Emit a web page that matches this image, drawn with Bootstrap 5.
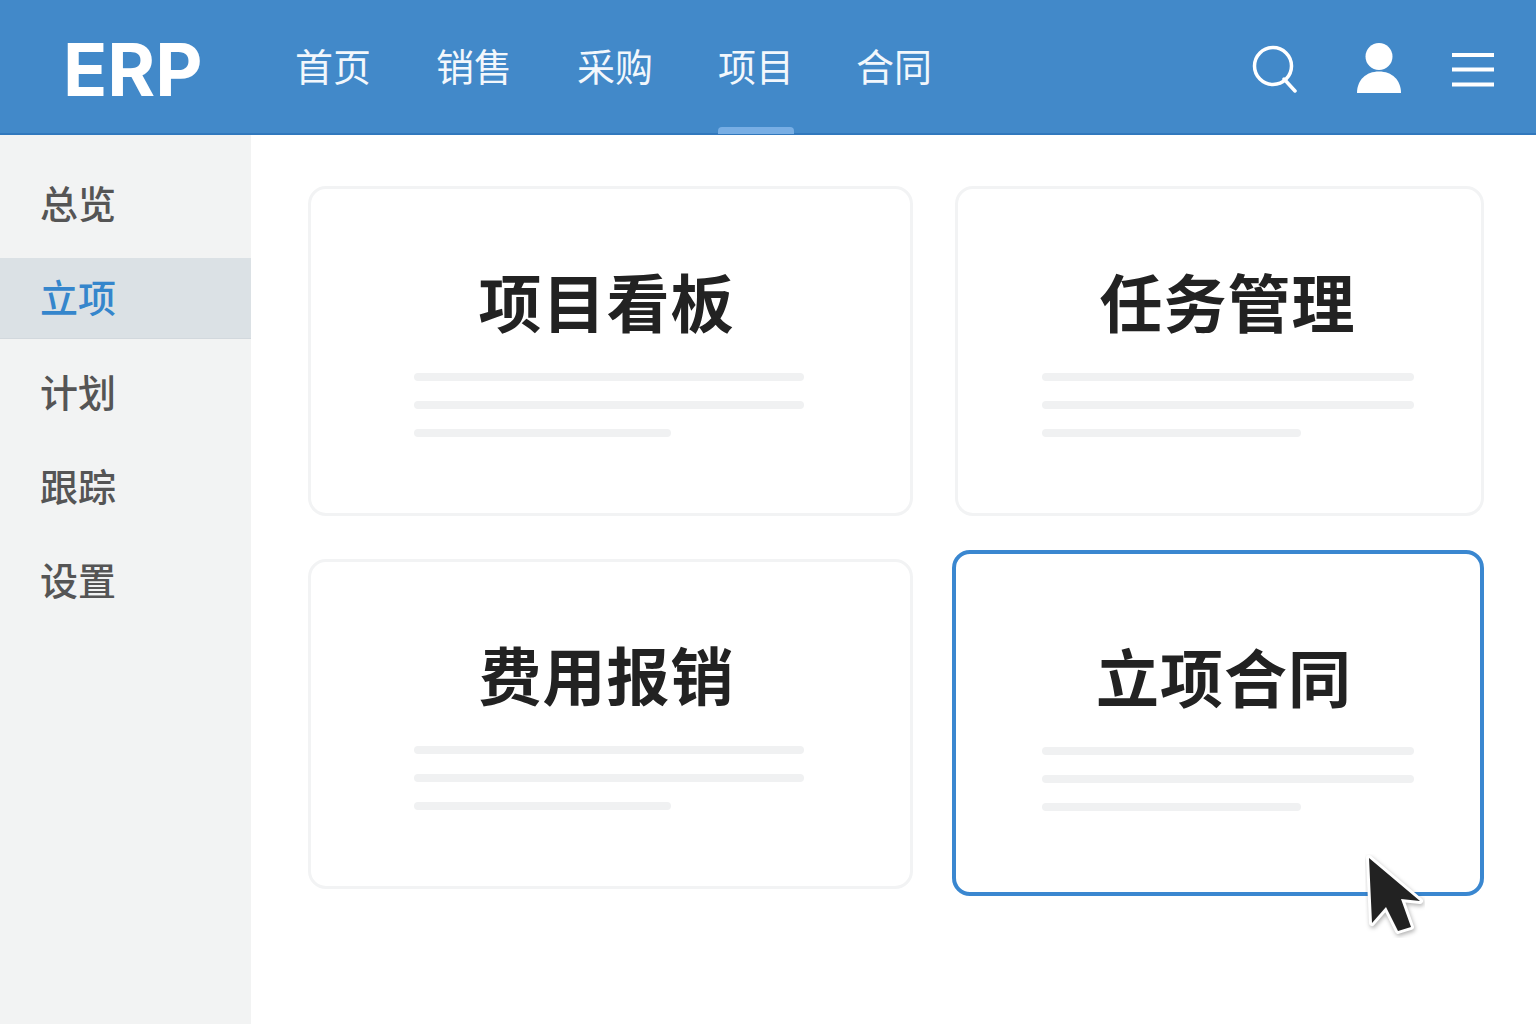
<!DOCTYPE html>
<html lang="zh-CN">
<head>
    <meta charset="UTF-8">
    <meta name="viewport" content="width=device-width, initial-scale=1.0">
    <title>ERP</title>
    <link href="https://cdn.jsdelivr.net/npm/bootstrap@5.3.0/dist/css/bootstrap.min.css" rel="stylesheet">
    <style>
        body {
            height: 1024px;
            overflow: hidden;
            background: #fff;
            font-family: "Noto Sans", "Noto Sans CJK SC", sans-serif;
        }

        .erp-top {
            height: 135px;
            padding: 0 42px 0 63px;
            background: #4289c9;
            border-bottom: 2px solid #3178bd;
        }

        .erp-logo {
            width: 232px;
            margin-top: 6px;
            color: #fff;
            font-family: "Inter", "Noto Sans", sans-serif;
            font-size: 73px;
            font-weight: 700;
            line-height: 1;
        }

        .top-link {
            position: relative;
            height: 133px;
            margin-right: 65px;
            color: #f2f7fc;
            font-size: 38px;
            line-height: 133px;
            text-decoration: none;
        }

        .top-link.is-active {
            margin-right: 62px;
        }

        .top-link.is-active::after {
            content: "";
            position: absolute;
            left: 0;
            right: 0;
            bottom: -1px;
            height: 7px;
            background: #78aee4;
            border-radius: 4px 4px 0 0;
        }

        .top-icons svg {
            display: block;
        }

        .icon-search { margin-top: 5px; }
        .icon-user { margin-left: 58px; margin-top: 2px; }
        .icon-menu { margin-left: 50px; margin-top: 6px; }

        .erp-side {
            width: 251px;
            height: 889px;
            padding-top: 23px;
            background: #f2f3f3;
        }

        .side-link {
            display: block;
            height: 80px;
            margin-bottom: 14px;
            padding-left: 40px;
            color: #555;
            font-size: 38px;
            font-weight: 500;
            line-height: 90px;
            text-decoration: none;
        }

        .side-link.is-active {
            height: 81px;
            margin-top: 20px;
            margin-bottom: 8px;
            background: #dbe1e5;
            border-bottom: 1px solid #d2d8dd;
            color: #3586cc;
            line-height: 78px;
        }

        .erp-main {
            padding: 51px 0 0 57px;
        }

        .tile-grid {
            display: grid;
            grid-template-columns: 605px 529px;
            grid-auto-rows: 330px;
            gap: 43px 42px;
        }

        .tile {
            padding: 72px 0 0;
            background: #fff;
            border: 3px solid #f2f3f4;
            border-radius: 18px;
        }

        .tile h2 {
            margin: 0 0 28px;
            color: #222;
            font-size: 63px;
            font-weight: 700;
            line-height: 84px;
            letter-spacing: 1px;
            text-align: center;
        }

        .tile-wide h2 { padding-right: 8px; }
        .tile-narrow h2 { padding-left: 16px; }

        .tile-line {
            height: 8px;
            margin-bottom: 20px;
            background: #f0f1f2;
            border-radius: 4px;
        }

        .tile-wide .tile-line { width: 390px; margin-left: 103px; }
        .tile-wide .tile-line.is-short { width: 257px; }
        .tile-narrow .tile-line { width: 372px; margin-left: 84px; }
        .tile-narrow .tile-line.is-short { width: 259px; }

        .tile.is-selected {
            position: relative;
            margin: -9px 0 -7px -3px;
            padding-top: 82px;
            border: 4px solid #3a87d0;
        }

        .tile.is-selected h2 {
            margin-bottom: 27px;
            padding-left: 12px;
        }

        .tile.is-selected .tile-line { margin-left: 86px; }

        .erp-cursor {
            position: absolute;
            right: 55px;
            bottom: -46px;
        }

        .erp-cursor path {
            paint-order: stroke;
            filter: drop-shadow(1px 2px 2px rgba(0, 0, 0, .3));
        }
    </style>
</head>
<body>
<header class="erp-top d-flex align-items-center">
    <div class="erp-logo">ERP</div>
    <nav class="d-flex">
        <a class="top-link" href="#">首页</a>
        <a class="top-link" href="#">销售</a>
        <a class="top-link" href="#">采购</a>
        <a class="top-link is-active" href="#">项目</a>
        <a class="top-link" href="#">合同</a>
    </nav>
    <div class="top-icons ms-auto d-flex align-items-center">
        <svg class="icon-search" width="46" height="48" viewBox="0 0 46 48" fill="none" stroke="#fff" stroke-width="3.5">
            <circle cx="21" cy="21" r="18.5"/>
            <path d="M32 34 L43 46" stroke-linecap="round"/>
        </svg>
        <svg class="icon-user" width="46" height="50" viewBox="0 0 46 50" fill="#fff">
            <circle cx="23" cy="13.500" r="13.500"/>
            <path d="M1 50 C1 37 10 28.500 23 28.500 C36 28.500 45 37 45 50 Z"/>
        </svg>
        <svg class="icon-menu" width="42" height="36" viewBox="0 0 42 36" fill="#fff">
            <rect x="0" y="1" width="42" height="4"/>
            <rect x="0" y="15.500" width="42" height="4"/>
            <rect x="0" y="30.500" width="42" height="4"/>
        </svg>
    </div>
</header>
<div class="d-flex">
    <aside class="erp-side">
        <a class="side-link" href="#">总览</a>
        <a class="side-link is-active" href="#">立项</a>
        <a class="side-link" href="#">计划</a>
        <a class="side-link" href="#">跟踪</a>
        <a class="side-link" href="#">设置</a>
    </aside>
    <main class="erp-main flex-grow-1">
        <div class="tile-grid">
            <div class="tile tile-wide">
                <h2>项目看板</h2>
                <div class="tile-line"></div>
                <div class="tile-line"></div>
                <div class="tile-line is-short"></div>
            </div>
            <div class="tile tile-narrow">
                <h2>任务管理</h2>
                <div class="tile-line"></div>
                <div class="tile-line"></div>
                <div class="tile-line is-short"></div>
            </div>
            <div class="tile tile-wide">
                <h2>费用报销</h2>
                <div class="tile-line"></div>
                <div class="tile-line"></div>
                <div class="tile-line is-short"></div>
            </div>
            <div class="tile tile-narrow is-selected">
                <h2>立项合同</h2>
                <div class="tile-line"></div>
                <div class="tile-line"></div>
                <div class="tile-line is-short"></div>
                <svg class="erp-cursor" width="60" height="84" viewBox="0 0 60 84">
                    <path d="M4 4 L55 47 L36 45 L46 73 L33 77 L21 53 L7 69 Z" fill="#222" stroke="#fff" stroke-width="6" stroke-linejoin="round"/>
                </svg>
            </div>
        </div>
    </main>
</div>
<script src="https://cdn.jsdelivr.net/npm/bootstrap@5.3.0/dist/js/bootstrap.bundle.min.js"></script>
</body>
</html>
